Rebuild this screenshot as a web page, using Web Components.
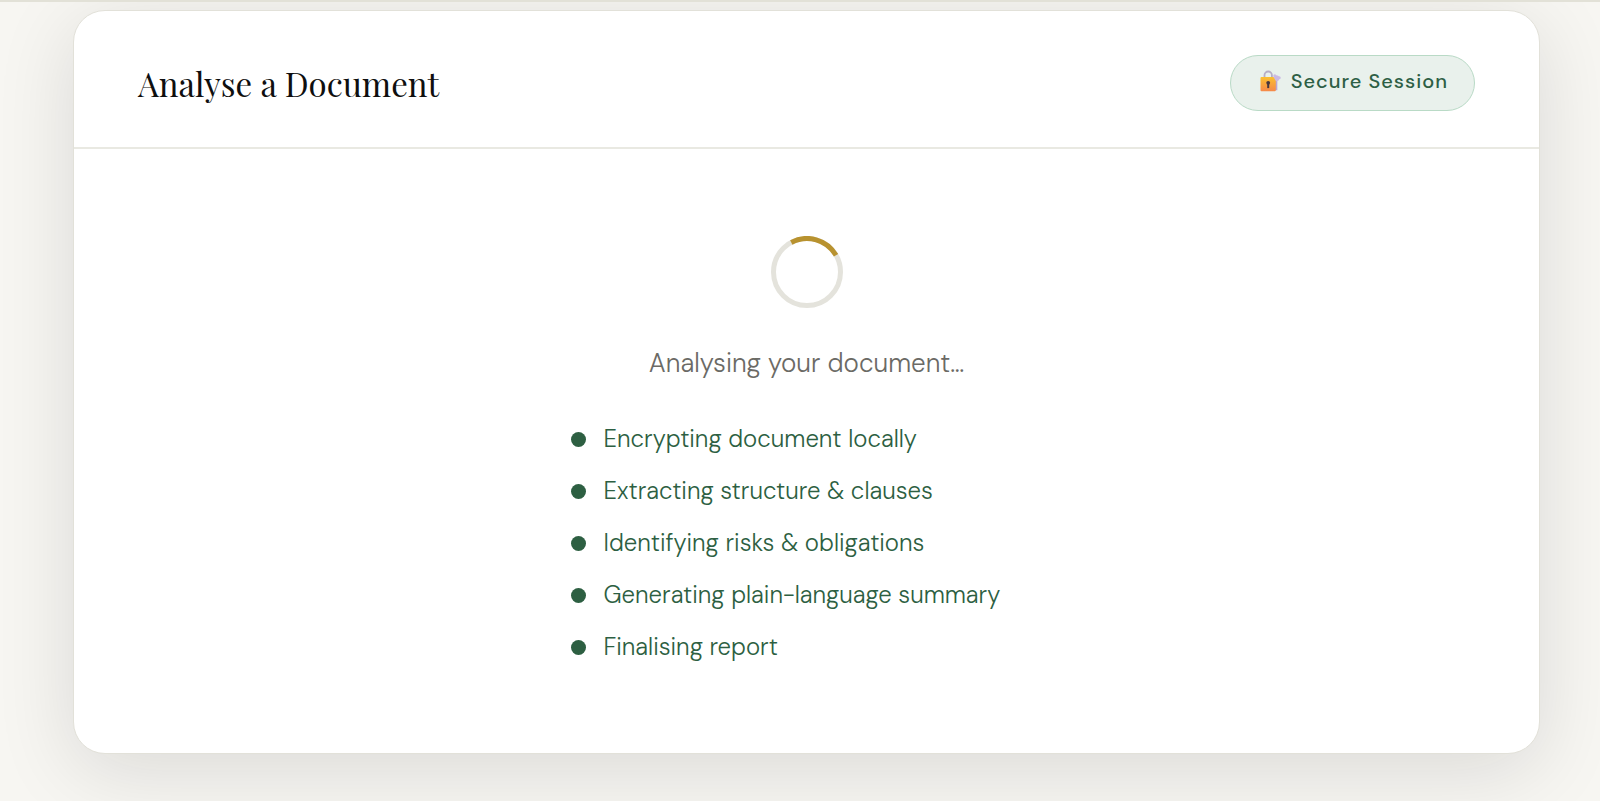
<!DOCTYPE html>
<html lang="en">
<head>
<meta charset="utf-8">
<meta name="viewport" content="width=device-width, initial-scale=1">
<title>Analyse a Document</title>
<style>
  html { height: 100%; }
  body {
    margin: 0;
    min-height: 100%;
    box-sizing: border-box;
    background: #f7f6f2;
    border-top: 2px solid #e2e1d7;
    font-family: "DM Sans", "Open Sans", "Noto Sans", sans-serif;
    color: #0f0f0f;
    overflow-x: hidden;
  }
</style>
</head>
<body>
<analysis-page>
  <document-card>
    <h2 slot="title">Analyse a Document</h2>
    <session-badge slot="status">Secure Session</session-badge>
    <analysis-progress>
      <span slot="message">Analysing your document…</span>
      <progress-step>Encrypting document locally</progress-step>
      <progress-step>Extracting structure &amp; clauses</progress-step>
      <progress-step>Identifying risks &amp; obligations</progress-step>
      <progress-step>Generating plain-language summary</progress-step>
      <progress-step>Finalising report</progress-step>
    </analysis-progress>
  </document-card>
</analysis-page>
<script>
  class BaseElement extends HTMLElement {
    constructor() {
      super();
      this.attachShadow({ mode: "open" }).innerHTML = this.constructor.markup;
    }
  }

  class AnalysisPage extends BaseElement {
    static markup = `
      <style>
        :host { display: block; padding: 8px 60px 44px 73px; }
      </style>
      <main><slot></slot></main>`;
  }

  class DocumentCard extends BaseElement {
    static markup = `
      <style>
        :host {
          display: block;
          background: #fff;
          border: 1px solid #e2e1d9;
          border-radius: 32px;
          box-shadow: 0 16px 80px rgba(15, 15, 22, 0.12);
        }
        header {
          display: flex;
          align-items: center;
          justify-content: space-between;
          gap: 24px;
          padding: 44px 64px 36px;
          border-bottom: 2px solid #e9e9e2;
        }
        ::slotted(h2) {
          margin: 0;
          font: 400 33px/48px "Playfair Display", "Liberation Serif", serif;
        }
        .body { padding: 87px 64px 88px; }
      </style>
      <header><slot name="title"></slot><slot name="status"></slot></header>
      <div class="body"><slot></slot></div>`;
  }

  class SessionBadge extends BaseElement {
    static markup = `
      <style>
        :host {
          display: inline-flex;
          align-items: center;
          gap: 10px;
          box-sizing: border-box;
          padding: 10px 26px 14px 28px;
          border: 1px solid #b9dac6;
          border-radius: 40px;
          background: #e9f1ec;
          color: #2d5f45;
          font-size: 20px;
          font-weight: 500;
          line-height: 30px;
          letter-spacing: 1px;
          white-space: nowrap;
        }
        svg { display: block; flex: none; }
      </style>
      <svg width="22" height="22" viewBox="0 0 22 22" aria-hidden="true">
        <defs>
          <linearGradient id="lock" x1="0" y1="0" x2="0" y2="1">
            <stop offset="0" stop-color="#fbc02f"/>
            <stop offset="1" stop-color="#f5894a"/>
          </linearGradient>
        </defs>
        <path d="M13.500 9 15.500 20.300H18.300V10Z" fill="#b9a5d3"/>
        <circle cx="17.300" cy="8.300" r="3" fill="#cbb9e2"/>
        <circle cx="15.800" cy="5.800" r="1.500" fill="#cbb9e2"/>
        <circle cx="20.200" cy="7.800" r="1.500" fill="#cbb9e2"/>
        <path d="M5.500 8V5.200a3.700 3.700 0 0 1 7.400 0V8" fill="none" stroke="#b7aec6" stroke-width="1.800"/>
        <path d="M2.500 7H14.500L16.800 11V20.200a1 1 0 0 1-1 1H2.500a1 1 0 0 1-1-1V8a1 1 0 0 1 1-1Z" fill="url(#lock)"/>
        <circle cx="9.200" cy="12.800" r="1.900" fill="#46363f"/>
        <path d="M8.200 13.500h2v4.600h-2Z" fill="#46363f"/>
      </svg>
      <span><slot></slot></span>`;
  }

  class AnalysisProgress extends BaseElement {
    static markup = `
      <style>
        :host { display: flex; flex-direction: column; align-items: center; }
        svg { display: block; }
        p {
          margin: 35px 0 0;
          color: #6b6a65;
          font-size: 26px;
          font-weight: 300;
          line-height: 40px;
        }
        .steps {
          display: flex;
          flex-direction: column;
          gap: 16px;
          box-sizing: border-box;
          width: 100%;
          max-width: 472px;
          margin-top: 38px;
        }
      </style>
      <svg width="72" height="72" viewBox="0 0 72 72" role="img" aria-label="Loading">
        <circle cx="36" cy="36" r="33.500" fill="none" stroke="#e4e3dc" stroke-width="5"/>
        <circle cx="36" cy="36" r="33.500" fill="none" stroke="#b8922f" stroke-width="5"
                pathLength="360" stroke-dasharray="88 272" transform="rotate(-118 36 36)"/>
      </svg>
      <p role="status"><slot name="message"></slot></p>
      <div class="steps" role="list"><slot></slot></div>`;
  }

  class ProgressStep extends BaseElement {
    static markup = `
      <style>
        :host {
          display: flex;
          align-items: center;
          gap: 18px;
          color: #2d5f42;
          font-size: 24px;
          font-weight: 300;
          line-height: 36px;
        }
        i { flex: none; width: 15px; height: 15px; border-radius: 50%; background: currentColor; }
      </style>
      <i></i><span><slot></slot></span>`;
    connectedCallback() { this.setAttribute("role", "listitem"); }
  }

  customElements.define("analysis-page", AnalysisPage);
  customElements.define("document-card", DocumentCard);
  customElements.define("session-badge", SessionBadge);
  customElements.define("analysis-progress", AnalysisProgress);
  customElements.define("progress-step", ProgressStep);
</script>
</body>
</html>
